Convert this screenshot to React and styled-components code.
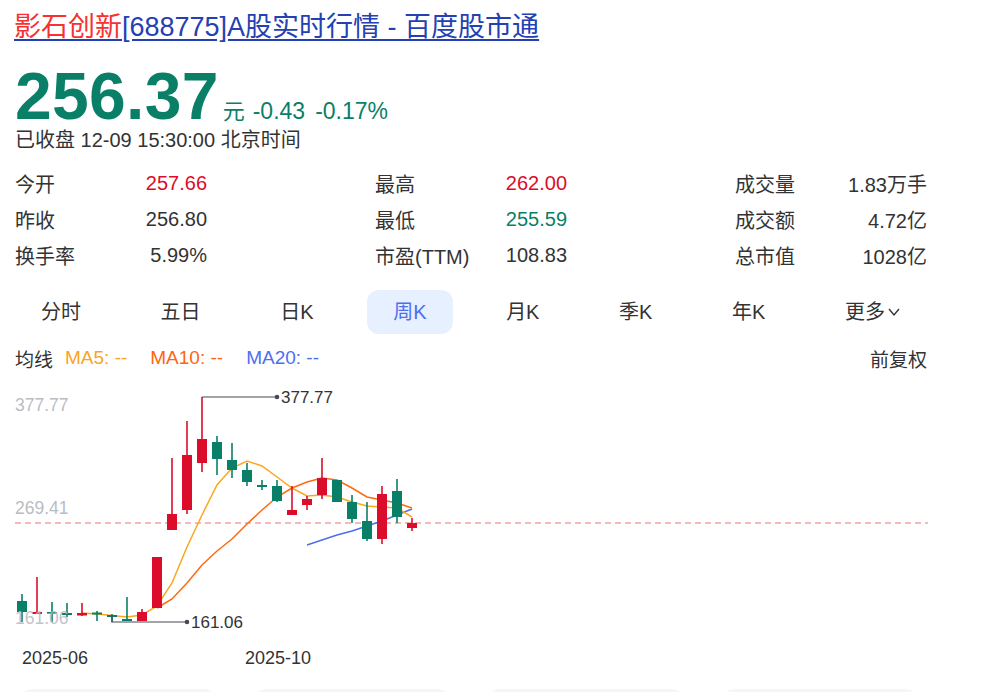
import React from "react";
import styled, { createGlobalStyle } from "styled-components";

const GlobalStyle = createGlobalStyle`
  html, body { margin: 0; padding: 0; background: #fff; }
  body { font-family: "Liberation Sans", Arial, "Noto Sans CJK SC", sans-serif; color: #333; }
`;

const RED = "#dc0d2a";
const GREEN = "#0a7f68";

const Page = styled.div`
  width: 999px;
  height: 692px;
  overflow: hidden;
`;

const Section = styled.div`
  margin-left: 15px;
  width: 912px;
`;

const Title = styled.a`
  display: block;
  margin-top: 9px;
  margin-left: 14px;
  height: 36px;
  line-height: 36px;
  font-size: 27px;
  white-space: nowrap;
  color: #2440b3;
  text-decoration: underline;
  text-underline-offset: 3px;
  cursor: pointer;
`;

const TitleRed = styled.span`
  color: #f73131;
`;

const PriceRow = styled.div`
  margin-top: 23px;
  height: 56px;
  display: flex;
  align-items: baseline;
`;

const BigPrice = styled.span`
  font-size: 66px;
  font-weight: 700;
  line-height: 56px;
  color: ${GREEN};
  letter-spacing: 0.3px;
`;

const Unit = styled.span`
  font-size: 22px;
  color: ${GREEN};
  margin-left: 4px;
`;

const Change = styled.span`
  font-size: 23px;
  color: ${GREEN};
  margin-left: ${(p) => p.$gap}px;
`;

const Status = styled.div`
  margin-top: 3px;
  height: 26px;
  line-height: 26px;
  font-size: 20px;
  color: #333;
`;

const Stats = styled.div`
  margin-top: 12px;
  display: grid;
  grid-template-columns: repeat(3, 192px);
  justify-content: space-between;
  grid-auto-rows: 36px;
`;

const StatCell = styled.div`
  display: flex;
  align-items: center;
  justify-content: space-between;
  font-size: 20px;
`;

const StatLabel = styled.span`
  color: #333;
`;

const StatValue = styled.span`
  color: ${(p) => p.$color || "#333"};
`;

const Tabs = styled.div`
  margin-top: 17px;
  display: flex;
  justify-content: space-between;
`;

const Tab = styled.div`
  height: 44px;
  line-height: 44px;
  padding: 0 26px;
  border-radius: 12px;
  font-size: 20px;
  display: flex;
  align-items: center;
  gap: 2px;
  color: ${(p) => (p.$active ? "#4e6ef2" : "#333")};
  background: ${(p) => (p.$active ? "#e7f0fe" : "transparent")};
`;

const Legend = styled.div`
  margin-top: 12px;
  height: 24px;
  display: flex;
  align-items: center;
  font-size: 19px;
`;

const LegendItem = styled.span`
  color: ${(p) => p.$color};
  margin-left: ${(p) => p.$gap}px;
`;

const Adjust = styled.span`
  margin-left: auto;
  color: #333;
`;

const ChartSvg = styled.svg`
  display: block;
  margin-top: 10px;
  margin-left: 15px;
  font-family: "Liberation Sans", Arial, sans-serif;
`;

const Cards = styled.div`
  margin-top: 19px;
  padding-left: 20px;
  display: flex;
  gap: 38px;
`;

const Card = styled.div`
  width: 196px;
  height: 80px;
  flex-shrink: 0;
  border-radius: 12px;
  background: #f5f6f8;
`;

const stats = [
  ["今开", "257.66", RED],
  ["最高", "262.00", RED],
  ["成交量", "1.83万手"],
  ["昨收", "256.80"],
  ["最低", "255.59", GREEN],
  ["成交额", "4.72亿"],
  ["换手率", "5.99%"],
  ["市盈(TTM)", "108.83"],
  ["总市值", "1028亿"],
];

const tabs = ["分时", "五日", "日K", "周K", "月K", "季K", "年K"];

// [bodyTop, bodyBottom, wickTop, wickBottom, up]
const candles = [
  [601, 612, 594, 622, false],
  [612, 614, 577, 614, true],
  [612, 613.5, 602, 622, false],
  [613, 615, 603, 617, false],
  [613, 615.5, 603, 616, true],
  [612.5, 614.5, 611, 621, false],
  [615, 617, 614, 622, false],
  [619, 621, 597, 621, false],
  [612, 621, 609, 621, true],
  [557, 608, 557, 608, true],
  [514, 530, 458, 530, true],
  [455, 510, 421, 514, true],
  [439, 463, 397, 472, true],
  [442, 459, 436, 475, false],
  [460, 470, 443, 478, false],
  [470, 482, 463, 486, false],
  [485, 487, 480, 490, false],
  [486, 501, 480, 502, false],
  [510, 515, 486, 515, true],
  [499, 505, 496, 510, true],
  [478, 495, 458, 499, true],
  [480, 502, 480, 502, false],
  [502, 519, 495, 523, false],
  [521, 539, 502, 541, false],
  [494, 539, 486, 544, true],
  [491, 517, 479, 523, false],
  [523, 528, 518, 531, true],
];

const cx = (i) => 22 + 15 * i;

const ma5 = [613, 614, 615.5, 617, 615, 606, 583, 547, 515, 485, 468, 461, 466, 477, 488, 496, 495, 497, 502, 506, 507, 508, 517];
const ma10 = [608, 599, 583, 565, 551, 539, 524, 510, 497, 488, 482, 478, 480, 488, 497, 500, 503, 508];
const ma20 = [545, 540, 535, 531, 526, 521, 515, 509];

const pts = (arr, start) => arr.map((y, k) => `${cx(start + k)},${y}`).join(" ");

function Chart() {
  return (
    <ChartSvg width="913" height="290" viewBox="15 380 913 290">
      <line x1="15" y1="523" x2="928" y2="523" stroke="#f4a3a3" strokeWidth="1.5" strokeDasharray="6 4" />
      <g fontSize="17.5" fill="#b9bcc3">
        <text x="15" y="405" dominantBaseline="central">377.77</text>
        <text x="15" y="508" dominantBaseline="central">269.41</text>
      </g>
      <polyline points={pts(ma20, 19)} fill="none" stroke="#4a6ff3" strokeWidth="1.5" />
      <polyline points={pts(ma10, 9)} fill="none" stroke="#ff6a0f" strokeWidth="1.5" />
      <polyline points={pts(ma5, 4)} fill="none" stroke="#fba620" strokeWidth="1.5" />
      {candles.map(([bt, bb, wt, wb, up], i) => {
        const c = up ? RED : GREEN;
        return (
          <g key={i}>
            <line x1={cx(i)} y1={wt} x2={cx(i)} y2={wb} stroke={c} strokeWidth="1.6" />
            <rect x={cx(i) - 5} y={bt} width="10" height={Math.max(bb - bt, 1.6)} fill={c} />
          </g>
        );
      })}
      <text x="15" y="618" fontSize="17.5" fill="#b9bcc3" fillOpacity="0.9" dominantBaseline="central">161.06</text>
      <polyline points="202,397 277,397" fill="none" stroke="#454a55" strokeWidth="1.2" />
      <circle cx="277" cy="397" r="2.3" fill="#454a55" />
      <text x="281" y="397" fontSize="17" fill="#333" dominantBaseline="central">377.77</text>
      <polyline points="112,615 112,622 187,622" fill="none" stroke="#454a55" strokeWidth="1.2" />
      <circle cx="187" cy="622" r="2.3" fill="#454a55" />
      <text x="191" y="622" fontSize="17" fill="#333" dominantBaseline="central">161.06</text>
      <g fontSize="18" fill="#333">
        <text x="22" y="658" dominantBaseline="central">2025-06</text>
        <text x="245" y="658" dominantBaseline="central">2025-10</text>
      </g>
    </ChartSvg>
  );
}

export default function App() {
  return (
    <Page>
      <GlobalStyle />
      <Title>
        <TitleRed>影石创新</TitleRed>[688775]A股实时行情 - 百度股市通
      </Title>
      <Section>
        <PriceRow>
          <BigPrice>256.37</BigPrice>
          <Unit>元</Unit>
          <Change $gap={8}>-0.43</Change>
          <Change $gap={10}>-0.17%</Change>
        </PriceRow>
        <Status>已收盘 12-09 15:30:00 北京时间</Status>
        <Stats>
          {stats.map(([l, v, c]) => (
            <StatCell key={l}>
              <StatLabel>{l}</StatLabel>
              <StatValue $color={c}>{v}</StatValue>
            </StatCell>
          ))}
        </Stats>
        <Tabs>
          {tabs.map((t) => (
            <Tab key={t} $active={t === "周K"}>{t}</Tab>
          ))}
          <Tab>
            更多
            <svg width="14" height="10" viewBox="0 0 14 10">
              <polyline points="2,2 7,8 12,2" fill="none" stroke="#333" strokeWidth="1.4" />
            </svg>
          </Tab>
        </Tabs>
        <Legend>
          <span>均线</span>
          <LegendItem $color="#f9a51f" $gap={12}>MA5: --</LegendItem>
          <LegendItem $color="#ff6410" $gap={23}>MA10: --</LegendItem>
          <LegendItem $color="#4e6ef2" $gap={23}>MA20: --</LegendItem>
          <Adjust>前复权</Adjust>
        </Legend>
      </Section>
      <Chart />
      <Cards>
        <Card />
        <Card />
        <Card />
        <Card />
      </Cards>
    </Page>
  );
}
